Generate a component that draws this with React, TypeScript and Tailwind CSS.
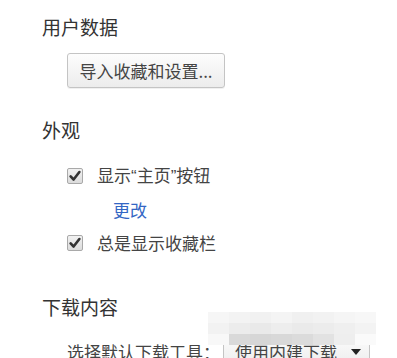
import type { ReactNode } from 'react'

const FONT = '"Noto Sans CJK SC", "Noto Sans", sans-serif'

const MOSAIC: string[][] = [
  ['#f6f6f6', '#f3f3f3', '#f1f1f1', '#f4f4f4', '#f0f0f0', '#f2f2f2', '#f5f5f5', '#f7f7f7'],
  ['#f2f2f2', '#ececec', '#e9e9e9', '#ededed', '#eaeaea', '#ececec', '#efefef', '#f3f3f3'],
  ['#f8f8f8', '#d9d9d9', '#d6d6d6', '#d8d8d8', '#dbdbdb', '#e2e2e2', '#eeeeee', '#fafafa'],
]

function Checkbox() {
  return (
    <span className="flex h-4 w-4 shrink-0 items-center justify-center rounded-[2px] border border-[#a9a9a9] bg-gradient-to-b from-[#f1f1f1] to-[#dcdcdc]">
      <svg viewBox="0 0 16 16" className="h-[14px] w-[14px]">
        <path d="M3 8.5 L6.4 12 L13 3.5" fill="none" stroke="#333" strokeWidth="3" strokeLinecap="round" strokeLinejoin="round" />
      </svg>
    </span>
  )
}

function CheckRow({ children }: { children: ReactNode }) {
  return (
    <div className="flex h-6 items-center gap-[14px] pl-[67px] text-[17px] text-[#444]">
      <Checkbox />
      <span className="leading-6">{children}</span>
    </div>
  )
}

function Heading({ children, className }: { children: ReactNode; className: string }) {
  return <h2 className={`pl-[42px] text-[19px] leading-6 font-normal text-[#333] ${className}`}>{children}</h2>
}

export default function App() {
  return (
    <div className="relative h-[358px] w-[397px] overflow-hidden bg-white pt-[15px]" style={{ fontFamily: FONT }}>
      <Heading className="">用户数据</Heading>

      <div className="mt-[14px] pl-[67px]">
        <button className="flex h-[35px] w-[158px] items-center justify-center rounded-[3px] border border-[#c4c4c4] bg-gradient-to-b from-[#fdfdfd] to-[#ececec] text-[17px] text-[#444] shadow-[0_1px_0_rgba(0,0,0,0.06)]">
          导入收藏和设置...
        </button>
      </div>

      <Heading className="mt-[30px]">外观</Heading>

      <div className="mt-[22px]">
        <CheckRow>
          显示<span style={{ fontFamily: '"Liberation Sans", sans-serif' }}>“</span>主页
          <span style={{ fontFamily: '"Liberation Sans", sans-serif' }}>”</span>按钮
        </CheckRow>
      </div>

      <div className="mt-[10px] pl-[113px] text-[17px] leading-6 text-[#3366c4]">更改</div>

      <div className="mt-[9px]">
        <CheckRow>总是显示收藏栏</CheckRow>
      </div>

      <Heading className="mt-[40px]">下载内容</Heading>

      <div className="mt-[18px] flex h-[30px] items-center pl-[67px] text-[17px] text-[#444]">
        <span className="w-[156px]">选择默认下载工具：</span>
        <div className="flex h-[30px] w-[147px] items-center justify-between rounded-[2px] border border-[#c4c4c4] bg-gradient-to-b from-[#fbfbfb] to-[#ededed] pr-2 pl-[11px]">
          <span>使用内建下载</span>
          <svg viewBox="0 0 10 6" className="h-[6px] w-[10px]">
            <path d="M0 0 H10 L5 6 Z" fill="#222" />
          </svg>
        </div>
      </div>

      <div className="absolute top-[312px] left-[208px] grid grid-cols-8">
        {MOSAIC.flatMap((row, r) =>
          row.map((c, i) => <div key={`${r}-${i}`} className="h-[11px] w-[21px]" style={{ backgroundColor: c }} />),
        )}
      </div>
    </div>
  )
}
